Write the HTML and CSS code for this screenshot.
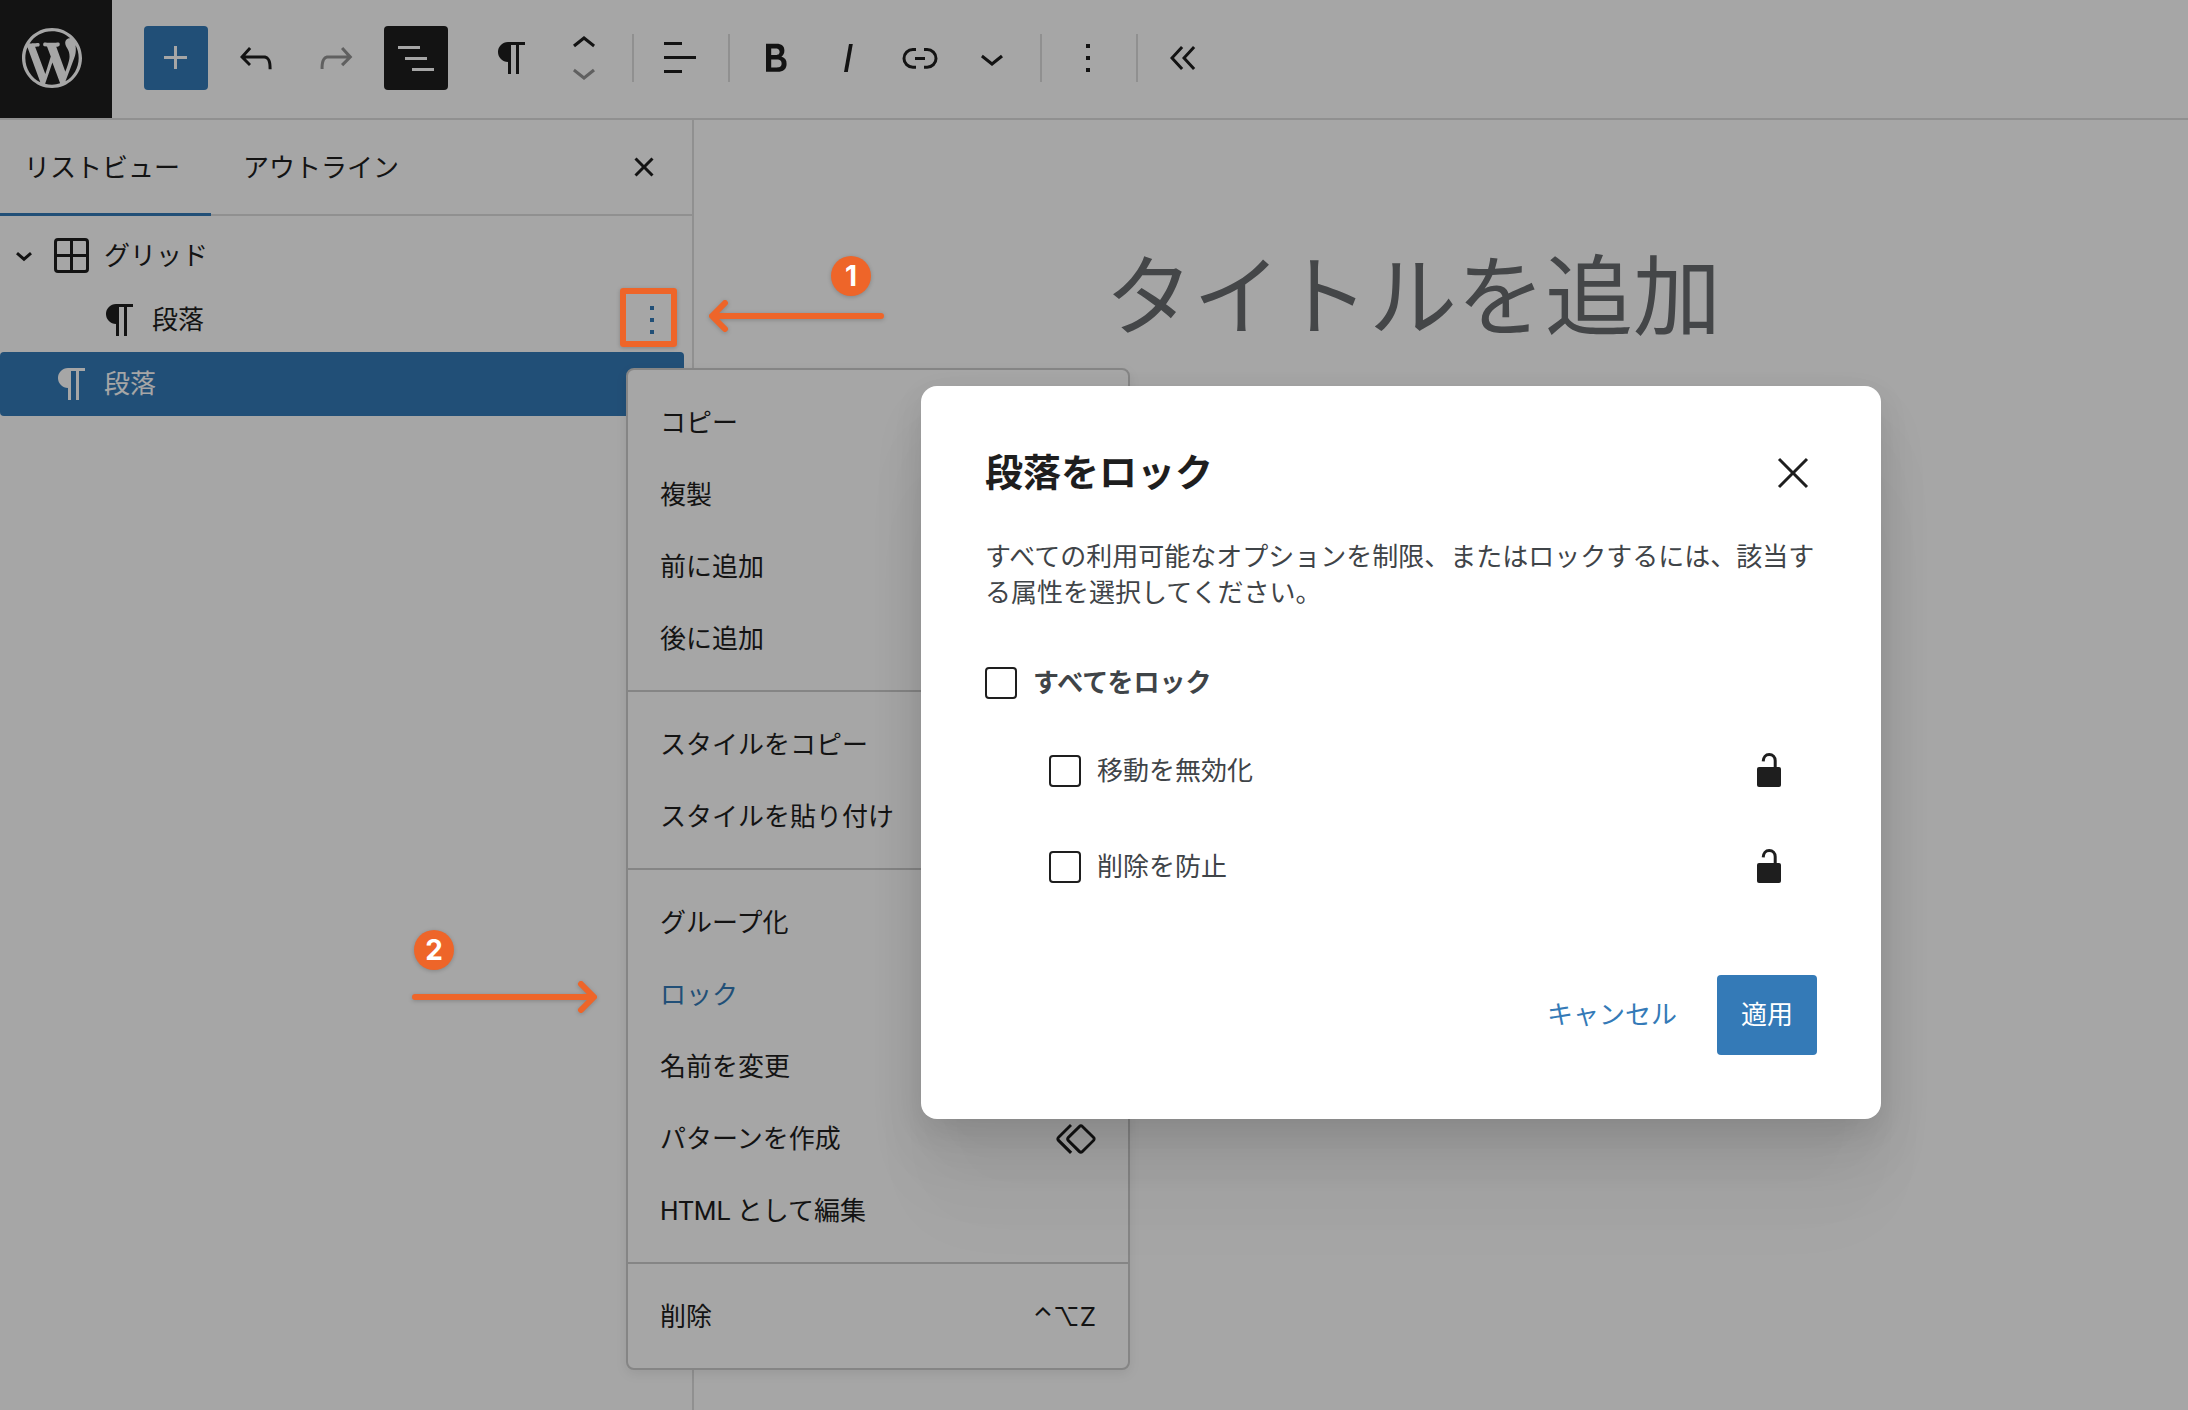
FILE: index.html
```html
<!DOCTYPE html>
<html lang="ja">
<head>
<meta charset="utf-8">
<meta name="viewport" content="width=device-width, initial-scale=1">
<title>タイトルを追加</title>
<link rel="stylesheet" href="styles.css">
</head>
<body>
<svg class="sprite" aria-hidden="true">
  <symbol id="i-plus" viewBox="0 0 24 24"><path d="M11 12.5V17.5H12.5V12.5H17.5V11H12.5V6H11V11H6V12.5H11Z"/></symbol>
  <symbol id="i-paragraph" viewBox="0 0 24 24"><path d="m9.99609 14v-.2251l.00391.0001v6.225h1.5v-14.5h2.5v14.5h1.5v-14.5h3v-1.5h-8.50391c-2.76142 0-5 2.23858-5 5 0 2.7614 2.23858 5 5 5z"/></symbol>
  <symbol id="i-up" viewBox="0 0 24 24"><path d="M6.5 12.4L12 8l5.5 4.4-.9 1.2L12 10l-4.5 3.6-1-1.2z"/></symbol>
  <symbol id="i-down" viewBox="0 0 24 24"><path d="M17.5 11.6L12 16l-5.5-4.4.9-1.2L12 14l4.5-3.6 1 1.2z"/></symbol>
  <symbol id="i-more" viewBox="0 0 24 24"><path d="M13 19h-2v-2h2v2zm0-6h-2v-2h2v2zm0-6h-2V5h2v2z"/></symbol>
  <symbol id="i-unlock" viewBox="0 0 24 24"><rect x="6" y="10" width="12" height="10" rx="1"/><path d="M9.1 7.2C9.2 5.2 10.3 3.8 12.1 3.8s3 1.3 3 3.1V10.5" fill="none" stroke="currentColor" stroke-width="1.5"/></symbol>
</svg>

<header class="topbar">
  <a class="logo" href="#" aria-label="WordPress">
    <svg viewBox="-2 -2 24 24"><path d="M20 10c0-5.51-4.49-10-10-10C4.48 0 0 4.49 0 10c0 5.52 4.48 10 10 10 5.51 0 10-4.48 10-10zM7.78 15.37L4.37 6.22c.55-.02 1.17-.08 1.17-.08.5-.06.44-1.13-.06-1.11 0 0-1.45.11-2.37.11-.18 0-.37 0-.58-.01C4.12 2.69 6.87 1.11 10 1.11c2.33 0 4.45.87 6.05 2.34-.68-.11-1.65.39-1.65 1.58 0 .74.45 1.36.9 2.1.35.61.55 1.36.55 2.46 0 1.49-1.4 5-1.4 5l-3.03-8.37c.54-.02.82-.17.82-.17.5-.05.44-1.25-.06-1.22 0 0-1.44.12-2.38.12-.87 0-2.33-.12-2.33-.12-.5-.03-.56 1.2-.06 1.22l.92.08 1.26 3.41zM17.41 10c.24-.64.74-1.87.43-4.25.7 1.29 1.05 2.71 1.05 4.25 0 3.29-1.73 6.24-4.4 7.78.97-2.59 1.94-5.2 2.92-7.78zM6.1 18.09C3.12 16.65 1.11 13.53 1.11 10c0-1.3.23-2.48.72-3.59C3.25 10.3 4.67 14.2 6.1 18.09zm4.03-6.63l2.58 6.98c-.86.29-1.76.45-2.71.45-.79 0-1.57-.11-2.29-.33.81-2.38 1.62-4.74 2.42-7.1z"/></svg>
  </a>
  <div class="doc-tools">
    <button class="tool tool-primary" aria-label="ブロック挿入ツール"><svg class="icon"><use href="#i-plus"/></svg></button>
    <button class="tool" aria-label="元に戻す"><svg class="icon" viewBox="0 0 24 24"><path d="M18.3 11.7c-.6-.6-1.4-.9-2.3-.9H6.7l2.9-3.3-1.1-1-4.5 5L8.5 16l1-1-2.7-2.7H16c.5 0 .9.2 1.3.5 1 1 1 3.4 1 4.5v.3h1.5v-.2c0-1.5 0-4.3-1.5-5.7z"/></svg></button>
    <button class="tool" aria-label="やり直す" disabled><svg class="icon" viewBox="0 0 24 24"><path d="M15.6 6.5l-1.1 1 2.9 3.3H8c-.9 0-1.7.3-2.3.9-1.4 1.5-1.4 4.2-1.4 5.6v.2h1.5v-.3c0-1.1 0-3.5 1-4.5.3-.3.7-.5 1.3-.5h9.2L14.5 15l1.1 1.1 4.6-4.6-4.6-5z"/></svg></button>
    <button class="tool tool-pressed" aria-label="リスト表示"><svg class="icon" viewBox="0 0 24 24"><path d="M3 6h11v1.5H3V6Zm3.5 5.5h11V13h-11v-1.5ZM21 17H10v1.5h11V17Z"/></svg></button>
  </div>
  <div class="block-tools">
    <div class="group">
      <button class="slot" aria-label="段落"><svg class="icon"><use href="#i-paragraph"/></svg></button>
      <div class="mover">
        <button class="mover-up" aria-label="上に移動"><svg class="icon"><use href="#i-up"/></svg></button>
        <button class="mover-down" aria-label="下に移動" disabled><svg class="icon"><use href="#i-down"/></svg></button>
      </div>
    </div>
    <div class="group">
      <button class="slot" aria-label="テキストの配置"><svg class="icon" viewBox="0 0 24 24"><path d="M13 5.5H4V4h9v1.5Zm7 7H4V11h16v1.5Zm-7 7H4V18h9v1.5Z"/></svg></button>
    </div>
    <div class="group">
      <button class="slot" aria-label="太字"><svg class="icon" viewBox="0 0 24 24"><path d="M14.7 11.3c1-.6 1.5-1.6 1.5-3 0-2.3-1.3-3.4-4-3.4H7v14h5.8c1.4 0 2.5-.3 3.3-1 .8-.7 1.2-1.7 1.2-2.9.1-1.9-.8-3.1-2.6-3.7zm-5.1-4h2.3c.6 0 1.1.1 1.4.4.3.3.5.7.5 1.2s-.2 1-.5 1.2c-.3.3-.8.4-1.4.4H9.6V7.3zm4.6 9c-.4.3-1 .4-1.7.4H9.6v-3.9h2.9c.7 0 1.3.2 1.7.5.4.3.6.8.6 1.5s-.2 1.2-.6 1.5z"/></svg></button>
      <button class="slot" aria-label="イタリック"><svg class="icon" viewBox="0 0 24 24"><path d="M12.5 5L10 19h1.9l2.5-14z"/></svg></button>
      <button class="slot" aria-label="リンク"><svg class="icon" viewBox="0 0 24 24"><path d="M10 17.389H8.444A5.194 5.194 0 1 1 8.444 7H10v1.5H8.444a3.694 3.694 0 0 0 0 7.389H10v1.5ZM14 7h1.556a5.194 5.194 0 0 1 0 10.39H14v-1.5h1.556a3.694 3.694 0 0 0 0-7.39H14V7Zm-4.5 6h5v-1.5h-5V13Z"/></svg></button>
      <button class="slot" aria-label="さらに表示"><svg class="icon"><use href="#i-down"/></svg></button>
    </div>
    <div class="group">
      <button class="slot" aria-label="オプション"><svg class="icon"><use href="#i-more"/></svg></button>
    </div>
    <div class="group group-last">
      <button class="slot" aria-label="ブロックツールを非表示"><svg class="icon" viewBox="0 0 24 24"><path d="M11.6 7l-1.1-1L5 12l5.5 6 1.1-1L7 12l4.6-5zm6 0l-1.1-1-5.5 6 5.5 6 1.1-1-4.6-5 4.6-5z"/></svg></button>
    </div>
  </div>
</header>

<div class="workspace">
  <aside class="sidebar">
    <div class="tabs">
      <button class="tab tab-active">リストビュー</button>
      <button class="tab">アウトライン</button>
      <button class="tabs-close" aria-label="閉じる"><svg class="icon" viewBox="0 0 24 24"><path d="M12 13.06l3.712 3.713 1.061-1.06L13.061 12l3.712-3.712-1.06-1.06L12 10.938 8.288 7.227l-1.061 1.06L10.939 12l-3.712 3.712 1.06 1.061L12 13.061z"/></svg></button>
    </div>
    <ul class="tree">
      <li class="row">
        <button class="expander" aria-label="折りたたむ"><svg viewBox="0 0 24 24"><path d="M5 9.2l7 6 7-6" fill="none" stroke="currentColor" stroke-width="3"/></svg></button>
        <a class="node" href="#"><svg class="icon" viewBox="0 0 24 24"><path d="M5 3.75h13.5a1.25 1.25 0 0 1 1.25 1.25v13.5a1.25 1.25 0 0 1-1.25 1.25H5a1.25 1.25 0 0 1-1.25-1.25V5A1.25 1.25 0 0 1 5 3.75zM11.75 4v16M4 11.75h16" fill="none" stroke="currentColor" stroke-width="1.5"/></svg>グリッド</a>
      </li>
      <li class="row row-child">
        <a class="node" href="#"><svg class="icon"><use href="#i-paragraph"/></svg>段落</a>
        <button class="row-more" aria-label="段落のオプション"><svg class="icon"><use href="#i-more"/></svg></button>
      </li>
      <li class="row row-selected">
        <a class="node" href="#"><svg class="icon"><use href="#i-paragraph"/></svg>段落</a>
      </li>
    </ul>
  </aside>
  <main class="canvas">
    <h1 class="post-title">タイトルを追加</h1>
  </main>
</div>

<div class="menu" role="menu">
  <div class="menu-group">
    <button class="menu-item" role="menuitem">コピー</button>
    <button class="menu-item" role="menuitem">複製</button>
    <button class="menu-item" role="menuitem">前に追加</button>
    <button class="menu-item" role="menuitem">後に追加</button>
  </div>
  <div class="menu-group">
    <button class="menu-item" role="menuitem">スタイルをコピー</button>
    <button class="menu-item" role="menuitem">スタイルを貼り付け</button>
  </div>
  <div class="menu-group">
    <button class="menu-item" role="menuitem">グループ化</button>
    <button class="menu-item menu-item-active" role="menuitem">ロック</button>
    <button class="menu-item" role="menuitem">名前を変更</button>
    <button class="menu-item" role="menuitem">パターンを作成<svg class="menu-icon" viewBox="0 0 22 24"><path d="M21.3 10.8l-5.6-5.6c-.7-.7-1.8-.7-2.5 0l-5.6 5.6c-.7.7-.7 1.8 0 2.5l5.6 5.6c.3.3.8.5 1.2.5s.9-.2 1.2-.5l5.6-5.6c.8-.7.8-1.9.1-2.5zm-1 1.4l-5.6 5.6c-.1.1-.3.1-.4 0l-5.6-5.6c-.1-.1-.1-.3 0-.4l5.6-5.6s.1-.1.2-.1.1 0 .2.1l5.6 5.6c.1.1.1.3 0 .4zm-16.6-.4L10 5.5l-1-1-6.3 6.3c-.7.7-.7 1.8 0 2.5L9 19.5l1.1-1.1-6.3-6.3c-.2 0-.2-.2-.1-.3z"/></svg></button>
    <button class="menu-item" role="menuitem">HTML として編集</button>
  </div>
  <div class="menu-group">
    <button class="menu-item" role="menuitem">削除<kbd>⌃⌥Z</kbd></button>
  </div>
</div>

<div class="overlay">
  <section class="modal" role="dialog" aria-modal="true" aria-labelledby="modal-title">
    <header class="modal-header">
      <h2 id="modal-title">段落をロック</h2>
      <button class="modal-close" aria-label="閉じる"><svg class="icon" viewBox="0 0 24 24"><path d="m13.06 12 6.47-6.47-1.06-1.06L12 10.94 5.53 4.47 4.47 5.53 10.94 12l-6.47 6.47 1.06 1.06L12 13.06l6.47 6.47 1.06-1.06L13.06 12Z"/></svg></button>
    </header>
    <p class="modal-text">すべての利用可能なオプションを制限、またはロックするには、該当する属性を選択してください。</p>
    <div class="option option-all">
      <input type="checkbox" id="lock-all"><label for="lock-all">すべてをロック</label>
    </div>
    <ul class="options">
      <li class="option">
        <input type="checkbox" id="lock-move"><label for="lock-move">移動を無効化</label>
        <svg class="icon"><use href="#i-unlock"/></svg>
      </li>
      <li class="option">
        <input type="checkbox" id="lock-remove"><label for="lock-remove">削除を防止</label>
        <svg class="icon"><use href="#i-unlock"/></svg>
      </li>
    </ul>
    <footer class="modal-actions">
      <button class="btn">キャンセル</button>
      <button class="btn btn-primary">適用</button>
    </footer>
  </section>
</div>

<div class="note note-frame"></div>
<span class="note note-badge note-badge-1">1</span>
<svg class="note note-arrow note-arrow-1" viewBox="0 0 184 40"><path d="M176 20H8M20 7L7 20l13 13"/></svg>
<span class="note note-badge note-badge-2">2</span>
<svg class="note note-arrow note-arrow-2" viewBox="0 0 194 40"><path d="M7 20h178M173 7l13 13-13 13"/></svg>
</body>
</html>
```
FILE: styles.css
```css
:root {
  --ink: #1e1e1e;
  --text: #3f4448;
  --blue: #347ab7;
  --line: #dddddd;
  --note: #ee6529;
}

* { box-sizing: border-box; }

body {
  margin: 0;
  min-height: 100vh;
  display: flex;
  flex-direction: column;
  position: relative;
  background: #fff;
  color: var(--ink);
  font: 26px/36px Roboto, "Noto Sans CJK JP", sans-serif;
}

button {
  margin: 0;
  padding: 0;
  border: 0;
  background: none;
  color: inherit;
  font: inherit;
  display: flex;
  align-items: center;
  justify-content: center;
}

button:disabled { color: #949494; }
a { color: inherit; text-decoration: none; }
ul { margin: 0; padding: 0; list-style: none; }
svg { fill: currentColor; flex: none; display: block; }

.sprite { position: absolute; width: 0; height: 0; }
.icon { width: 48px; height: 48px; }

/* Top toolbar */
.topbar {
  display: flex;
  align-items: center;
  height: 120px;
  padding-bottom: 4px;
  box-shadow: inset 0 -2px var(--line);
}

.logo {
  align-self: flex-start;
  width: 112px;
  height: 118px;
  padding: 0 0 2px 16px;
  display: flex;
  align-items: center;
  background: var(--ink);
  color: #fff;
}
.logo svg { width: 72px; height: 72px; }

.doc-tools { display: flex; gap: 16px; margin-left: 32px; }
.tool { width: 64px; height: 64px; border-radius: 4px; }
.tool-primary { background: var(--blue); color: #fff; }
.tool-pressed { background: var(--ink); color: #fff; }

.block-tools { display: flex; margin-left: 18px; }
.group {
  display: flex;
  align-items: center;
  height: 48px;
  padding: 0 12px 0 10px;
  border-right: 2px solid var(--line);
}
.group-last { border-right: 0; }
.slot { width: 72px; height: 48px; }
.mover { width: 72px; display: flex; flex-direction: column; align-items: center; }
.mover button { width: 48px; height: 38px; }
.mover .mover-up { align-items: flex-start; }
.mover .mover-down { align-items: flex-end; }

/* List view */
.workspace { flex: 1; display: flex; }
.sidebar { width: 694px; flex: none; border-right: 2px solid var(--line); }

.tabs {
  display: flex;
  align-items: stretch;
  height: 96px;
  padding-right: 24px;
  box-shadow: inset 0 -2px var(--line);
}
.tab { padding: 0 32px; }
.tab-active { padding: 0 31px 0 24px; box-shadow: inset 0 -3px var(--blue); }
.tabs-close { margin-left: auto; padding-bottom: 2px; }

.tree { padding: 8px 8px 0 0; }
.row { display: flex; align-items: center; height: 64px; padding: 0 8px 0 48px; }
.row:first-child { padding-left: 0; }
.row-child { padding-left: 96px; }
.row-selected { background: var(--blue); color: #fff; border-radius: 4px; }
.node { display: flex; align-items: center; gap: 8px; flex: 1; }
.expander { width: 48px; height: 48px; }
.expander svg { width: 24px; height: 24px; }
.row-more { color: var(--blue); }

/* Canvas */
.canvas { flex: 1; padding: 118px 32px 0 411px; }
.post-title { margin: 0; color: #696c6f; font-size: 88px; line-height: 120px; font-weight: 400; }

/* Block options menu */
.menu {
  position: absolute;
  top: 368px;
  left: 626px;
  width: 504px;
  background: #fff;
  border: 2px solid #cccccc;
  border-radius: 8px;
  box-shadow: 0 4px 12px rgba(0, 0, 0, .08);
}
.menu-group { padding: 16px 0; }
.menu-group + .menu-group { border-top: 2px solid #cccccc; }
.menu-item { width: 100%; height: 72px; padding: 2px 32px 0; justify-content: space-between; }
.menu-item-active { color: var(--blue); }
.menu-icon { width: 44px; height: 48px; }
kbd { font-family: Inter, "DejaVu Sans", sans-serif; }

/* Lock dialog */
.overlay { position: absolute; inset: 0; background: rgba(0, 0, 0, .35); }
.modal {
  position: absolute;
  top: 386px;
  left: 921px;
  width: 960px;
  padding: 64px;
  background: #fff;
  color: var(--text);
  border-radius: 16px;
  box-shadow: 0 10px 30px rgba(0, 0, 0, .08), 0 30px 54px rgba(0, 0, 0, .07), 0 60px 72px rgba(0, 0, 0, .04), 0 100px 86px rgba(0, 0, 0, .02);
}
.modal-header { display: flex; align-items: center; justify-content: space-between; height: 46px; color: var(--ink); }
.modal-header h2 { margin: 0; font-size: 38px; line-height: 46px; font-weight: 700; }
.modal-text { margin: 43px 0 40px; }

.option { display: flex; align-items: center; gap: 16px; height: 96px; padding-right: 24px; }
.option-all { height: 64px; font-weight: 700; }
.options { padding: 8px 0 60px 64px; }
.option label { flex: 1; }
.option .icon { color: var(--ink); }
input[type="checkbox"] {
  appearance: none;
  width: 32px;
  height: 32px;
  margin: 0;
  border: 2px solid var(--ink);
  border-radius: 4px;
  background: #fff;
}

.modal-actions { display: flex; justify-content: flex-end; gap: 16px; }
.btn { height: 80px; padding: 0 24px; border-radius: 4px; color: var(--blue); }
.btn-primary { background: var(--blue); color: #fff; }

/* Step annotations */
.note { position: absolute; }
.note-frame {
  top: 288px;
  left: 620px;
  width: 57px;
  height: 59px;
  border: 6px solid var(--note);
  border-radius: 3px;
  box-shadow: 0 1px 4px rgba(0, 0, 0, .2);
}
.note-badge {
  width: 40px;
  height: 40px;
  border-radius: 50%;
  background: var(--note);
  color: #fff;
  font: 700 28px/40px Inter, sans-serif;
  text-align: center;
  box-shadow: 0 1px 4px rgba(0, 0, 0, .2);
}
.note-badge-1 { top: 256px; left: 831px; }
.note-badge-2 { top: 930px; left: 414px; }
.note-arrow {
  height: 40px;
  fill: none;
  stroke: var(--note);
  stroke-width: 6;
  stroke-linecap: round;
  stroke-linejoin: round;
  filter: drop-shadow(0 1px 2px rgba(0, 0, 0, .2));
}
.note-arrow-1 { top: 296px; left: 705px; width: 184px; }
.note-arrow-2 { top: 977px; left: 408px; width: 194px; }
```
